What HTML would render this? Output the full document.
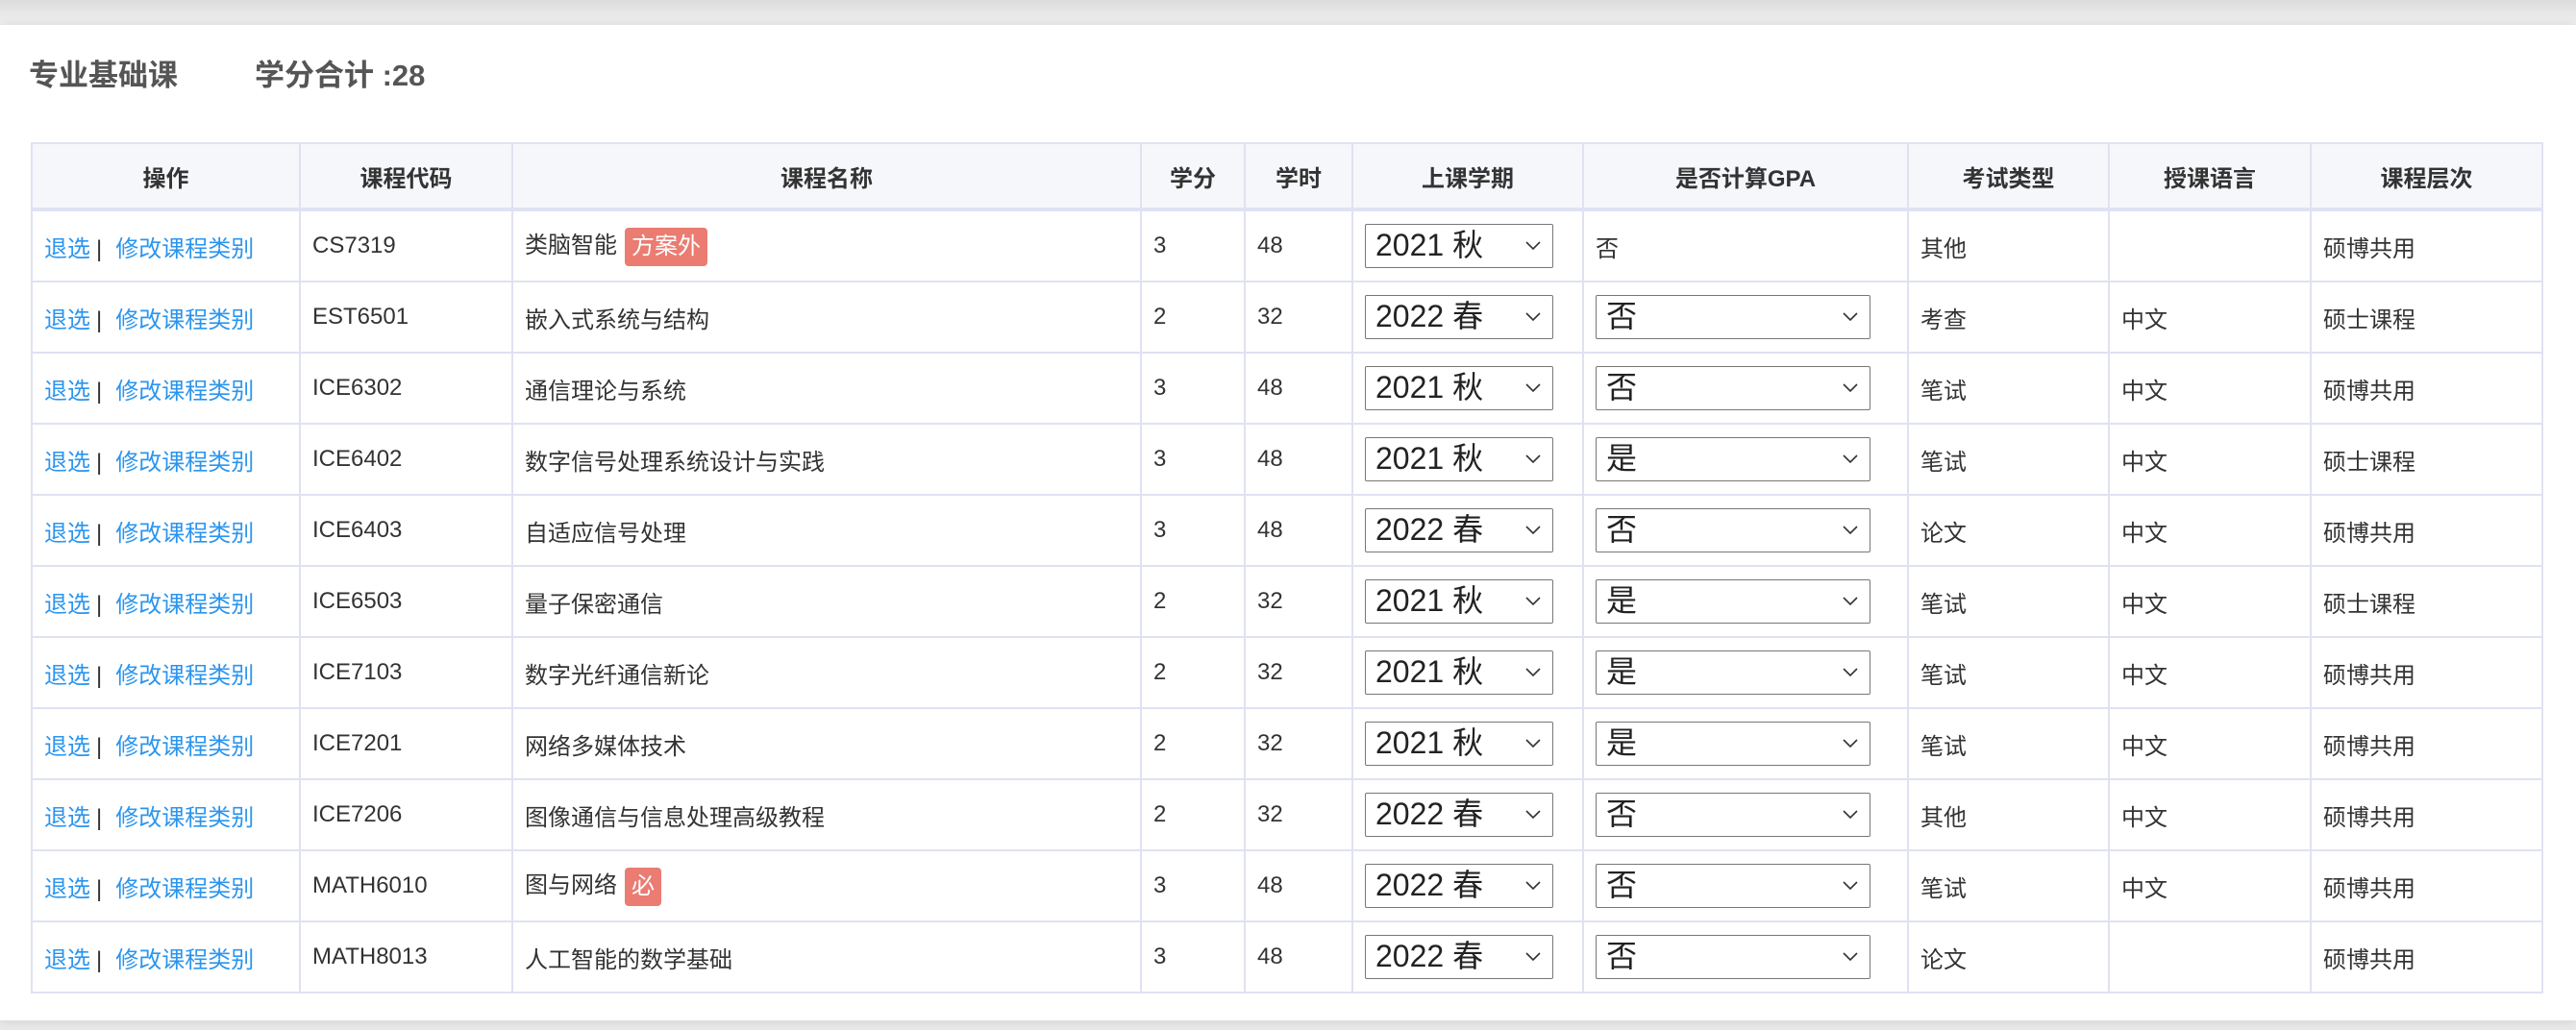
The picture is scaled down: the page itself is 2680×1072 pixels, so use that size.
<!DOCTYPE html>
<html><head><meta charset="utf-8">
<style>
html,body{margin:0;padding:0;width:2680px;height:1072px;overflow:hidden;background:#e9e9e9;font-family:"Liberation Sans","Noto Sans CJK SC",sans-serif;}
.card{position:absolute;left:0;top:26px;width:2680px;height:1036px;background:#fff;box-shadow:0 0 12px rgba(0,0,0,.12);}
.top{position:absolute;left:0;top:0;width:2680px;height:26px;background:linear-gradient(#dcdcdc,#f2f2f2);}
.t{position:absolute;top:53px;font-size:31px;font-weight:bold;color:#555;}
table{position:absolute;left:32px;top:148px;border-collapse:collapse;table-layout:fixed;width:2612px;}
td,th{border:2px solid #dfe2f2;font-size:24px;color:#333;padding:0 0 0 12px;text-align:left;white-space:nowrap;}
th{background:#f6f7fb;height:66px;text-align:center;padding:0;border-bottom:4px solid #dfe2f2;font-weight:bold;}
td{height:72px;}
a{color:#2b95ee;text-decoration:none;}
.sep{color:#333;margin:0 14px 0 6px;}
.b{display:inline-block;background:#ea7c72;color:#fff;border-radius:4px;padding:0 7px;height:40px;line-height:40px;margin-left:8px;vertical-align:middle;}
.s{display:inline-block;box-sizing:border-box;height:46px;border:1.5px solid #777;border-radius:2px;font-size:32px;line-height:43px;padding-left:10px;color:#222;position:relative;vertical-align:middle;}
.s svg{position:absolute;right:12px;top:17px;}
.s1{width:196px;}
.s2{width:286px;}
</style></head><body>
<div class="top"></div>
<div class="card"></div>
<div class="t" style="left:30px">专业基础课</div>
<div class="t" style="left:265px">学分合计 :28</div>
<table>
<colgroup><col style="width:279px"><col style="width:221px"><col style="width:654px"><col style="width:108px"><col style="width:112px"><col style="width:240px"><col style="width:338px"><col style="width:209px"><col style="width:210px"><col style="width:241px"></colgroup>
<tr><th>操作</th><th>课程代码</th><th>课程名称</th><th>学分</th><th>学时</th><th>上课学期</th><th>是否计算GPA</th><th>考试类型</th><th>授课语言</th><th>课程层次</th></tr>
<tr><td><a>退选</a><span class="sep">|</span><a>修改课程类别</a></td><td>CS7319</td><td>类脑智能<span class="b">方案外</span></td><td>3</td><td>48</td><td><span class="s s1">2021 秋<svg width="16" height="10"><path d="M1 1L8 8L15 1" fill="none" stroke="#333" stroke-width="1.6"/></svg></span></td><td>否</td><td>其他</td><td></td><td>硕博共用</td></tr>
<tr><td><a>退选</a><span class="sep">|</span><a>修改课程类别</a></td><td>EST6501</td><td>嵌入式系统与结构</td><td>2</td><td>32</td><td><span class="s s1">2022 春<svg width="16" height="10"><path d="M1 1L8 8L15 1" fill="none" stroke="#333" stroke-width="1.6"/></svg></span></td><td><span class="s s2">否<svg width="16" height="10"><path d="M1 1L8 8L15 1" fill="none" stroke="#333" stroke-width="1.6"/></svg></span></td><td>考查</td><td>中文</td><td>硕士课程</td></tr>
<tr><td><a>退选</a><span class="sep">|</span><a>修改课程类别</a></td><td>ICE6302</td><td>通信理论与系统</td><td>3</td><td>48</td><td><span class="s s1">2021 秋<svg width="16" height="10"><path d="M1 1L8 8L15 1" fill="none" stroke="#333" stroke-width="1.6"/></svg></span></td><td><span class="s s2">否<svg width="16" height="10"><path d="M1 1L8 8L15 1" fill="none" stroke="#333" stroke-width="1.6"/></svg></span></td><td>笔试</td><td>中文</td><td>硕博共用</td></tr>
<tr><td><a>退选</a><span class="sep">|</span><a>修改课程类别</a></td><td>ICE6402</td><td>数字信号处理系统设计与实践</td><td>3</td><td>48</td><td><span class="s s1">2021 秋<svg width="16" height="10"><path d="M1 1L8 8L15 1" fill="none" stroke="#333" stroke-width="1.6"/></svg></span></td><td><span class="s s2">是<svg width="16" height="10"><path d="M1 1L8 8L15 1" fill="none" stroke="#333" stroke-width="1.6"/></svg></span></td><td>笔试</td><td>中文</td><td>硕士课程</td></tr>
<tr><td><a>退选</a><span class="sep">|</span><a>修改课程类别</a></td><td>ICE6403</td><td>自适应信号处理</td><td>3</td><td>48</td><td><span class="s s1">2022 春<svg width="16" height="10"><path d="M1 1L8 8L15 1" fill="none" stroke="#333" stroke-width="1.6"/></svg></span></td><td><span class="s s2">否<svg width="16" height="10"><path d="M1 1L8 8L15 1" fill="none" stroke="#333" stroke-width="1.6"/></svg></span></td><td>论文</td><td>中文</td><td>硕博共用</td></tr>
<tr><td><a>退选</a><span class="sep">|</span><a>修改课程类别</a></td><td>ICE6503</td><td>量子保密通信</td><td>2</td><td>32</td><td><span class="s s1">2021 秋<svg width="16" height="10"><path d="M1 1L8 8L15 1" fill="none" stroke="#333" stroke-width="1.6"/></svg></span></td><td><span class="s s2">是<svg width="16" height="10"><path d="M1 1L8 8L15 1" fill="none" stroke="#333" stroke-width="1.6"/></svg></span></td><td>笔试</td><td>中文</td><td>硕士课程</td></tr>
<tr><td><a>退选</a><span class="sep">|</span><a>修改课程类别</a></td><td>ICE7103</td><td>数字光纤通信新论</td><td>2</td><td>32</td><td><span class="s s1">2021 秋<svg width="16" height="10"><path d="M1 1L8 8L15 1" fill="none" stroke="#333" stroke-width="1.6"/></svg></span></td><td><span class="s s2">是<svg width="16" height="10"><path d="M1 1L8 8L15 1" fill="none" stroke="#333" stroke-width="1.6"/></svg></span></td><td>笔试</td><td>中文</td><td>硕博共用</td></tr>
<tr><td><a>退选</a><span class="sep">|</span><a>修改课程类别</a></td><td>ICE7201</td><td>网络多媒体技术</td><td>2</td><td>32</td><td><span class="s s1">2021 秋<svg width="16" height="10"><path d="M1 1L8 8L15 1" fill="none" stroke="#333" stroke-width="1.6"/></svg></span></td><td><span class="s s2">是<svg width="16" height="10"><path d="M1 1L8 8L15 1" fill="none" stroke="#333" stroke-width="1.6"/></svg></span></td><td>笔试</td><td>中文</td><td>硕博共用</td></tr>
<tr><td><a>退选</a><span class="sep">|</span><a>修改课程类别</a></td><td>ICE7206</td><td>图像通信与信息处理高级教程</td><td>2</td><td>32</td><td><span class="s s1">2022 春<svg width="16" height="10"><path d="M1 1L8 8L15 1" fill="none" stroke="#333" stroke-width="1.6"/></svg></span></td><td><span class="s s2">否<svg width="16" height="10"><path d="M1 1L8 8L15 1" fill="none" stroke="#333" stroke-width="1.6"/></svg></span></td><td>其他</td><td>中文</td><td>硕博共用</td></tr>
<tr><td><a>退选</a><span class="sep">|</span><a>修改课程类别</a></td><td>MATH6010</td><td>图与网络<span class="b">必</span></td><td>3</td><td>48</td><td><span class="s s1">2022 春<svg width="16" height="10"><path d="M1 1L8 8L15 1" fill="none" stroke="#333" stroke-width="1.6"/></svg></span></td><td><span class="s s2">否<svg width="16" height="10"><path d="M1 1L8 8L15 1" fill="none" stroke="#333" stroke-width="1.6"/></svg></span></td><td>笔试</td><td>中文</td><td>硕博共用</td></tr>
<tr><td><a>退选</a><span class="sep">|</span><a>修改课程类别</a></td><td>MATH8013</td><td>人工智能的数学基础</td><td>3</td><td>48</td><td><span class="s s1">2022 春<svg width="16" height="10"><path d="M1 1L8 8L15 1" fill="none" stroke="#333" stroke-width="1.6"/></svg></span></td><td><span class="s s2">否<svg width="16" height="10"><path d="M1 1L8 8L15 1" fill="none" stroke="#333" stroke-width="1.6"/></svg></span></td><td>论文</td><td></td><td>硕博共用</td></tr>
</table>
</body></html>
